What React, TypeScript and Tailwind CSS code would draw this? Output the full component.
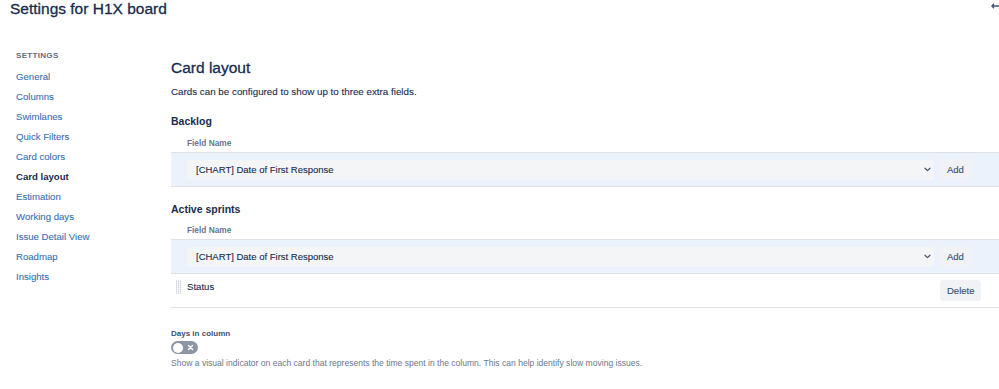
import React from 'react';

const navItems = [
  'General',
  'Columns',
  'Swimlanes',
  'Quick Filters',
  'Card colors',
  'Card layout',
  'Estimation',
  'Working days',
  'Issue Detail View',
  'Roadmap',
  'Insights',
];

function Chevron() {
  return (
    <svg width="7" height="5" viewBox="0 0 7 5" className="shrink-0">
      <path d="M1 1.2 L3.5 3.6 L6 1.2" fill="none" stroke="#42526e" strokeWidth="1.2" strokeLinecap="round" strokeLinejoin="round" />
    </svg>
  );
}

function DragHandle() {
  const dots = [];
  for (let r = 0; r < 7; r++) {
    for (let c = 0; c < 3; c++) {
      dots.push(<rect key={`${r}-${c}`} x={c * 2} y={r * 2 + 0.5} width="1.2" height="1.2" fill="#c1c7d0" />);
    }
  }
  return (
    <svg width="6" height="15" viewBox="0 0 6 15" className="block shrink-0">
      {dots}
    </svg>
  );
}

function ActionButton({ label }: { label: string }) {
  return (
    <div className="flex w-[65px] shrink-0 pl-[6px]">
      <button className="block h-[21px] rounded-[3px] bg-[#f1f2f5] px-[7px] text-[9.5px] leading-[21px] text-[#42526e] [-webkit-text-stroke:0.15px_#42526e]">
        {label}
      </button>
    </div>
  );
}

function FieldPicker({ value }: { value: string }) {
  return (
    <div className="flex items-center border-y border-[#dfe1e6] bg-[#ebf2fc] py-[6px] pl-[16px]">
      <div className="flex h-[20px] flex-1 items-center justify-between rounded-[3px] bg-[#f4f5f7] pl-[9px] pr-[3px]">
        <span className="text-[9.5px] leading-[12px] text-[#172b4d] [-webkit-text-stroke:0.1px_#172b4d]">{value}</span>
        <Chevron />
      </div>
      <ActionButton label="Add" />
    </div>
  );
}

export default function App() {
  return (
    <div className="relative h-[389px] w-[999px] overflow-hidden bg-white font-['Liberation_Sans',Arial,sans-serif] text-[#172b4d]">
      {/* Header */}
      <div className="flex h-[17px] items-start justify-between pl-[10px]">
        <h1 className="text-[15.5px] leading-[17px] text-[#172b4d] [-webkit-text-stroke:0.3px_#172b4d]">Settings for H1X board</h1>
        <svg width="8" height="6" viewBox="0 0 8 6" className="mt-[3px]">
          <path d="M3 0.8 L0.8 3 L3 5.2 M0.8 3 H8" fill="none" stroke="#42526e" strokeWidth="1.3" />
        </svg>
      </div>

      <div className="flex">
        {/* Sidebar */}
        <aside className="w-[171px] shrink-0 pl-[16px] pt-[33px]">
          <div className="mb-[5px] text-[8px] font-bold leading-[12px] tracking-[0.04em] text-[#5e6c84]">SETTINGS</div>
          <ul>
            {navItems.map((item) => (
              <li
                key={item}
                className={
                  item === 'Card layout'
                    ? 'text-[9.6px] font-bold leading-[20px] text-[#172b4d]'
                    : 'text-[9.6px] leading-[20px] text-[#3871b3] [-webkit-text-stroke:0.1px_#3871b3]'
                }
              >
                {item}
              </li>
            ))}
          </ul>
        </aside>

        {/* Main */}
        <main className="flex-1 pt-[41px]">
          <h2 className="text-[15.5px] leading-[20px] text-[#172b4d] [-webkit-text-stroke:0.3px_#172b4d]">Card layout</h2>
          <p className="mt-[7px] text-[9.8px] leading-[14px] text-[#172b4d] [-webkit-text-stroke:0.1px_#172b4d]">Cards can be configured to show up to three extra fields.</p>

          <h3 className="mt-[15px] text-[10.5px] font-bold leading-[14px] text-[#172b4d]">Backlog</h3>
          <div className="mt-[10px] pl-[16px] text-[8.3px] font-bold leading-[11px] text-[#6b778c]">Field Name</div>
          <div className="mt-[3px]">
            <FieldPicker value="[CHART] Date of First Response" />
          </div>

          <h3 className="mt-[15px] text-[10.5px] font-bold leading-[14px] text-[#172b4d]">Active sprints</h3>
          <div className="mt-[9px] pl-[16px] text-[8.3px] font-bold leading-[11px] text-[#6b778c]">Field Name</div>
          <div className="mt-[3px]">
            <FieldPicker value="[CHART] Date of First Response" />
          </div>
          <div className="flex items-start border-b border-[#dfe1e6] pb-[6px] pt-[6px]">
            <div className="flex flex-1 items-start pl-[5px]">
              <DragHandle />
              <span className="ml-[5px] text-[9.6px] leading-[13px] text-[#172b4d] [-webkit-text-stroke:0.1px_#172b4d]">Status</span>
            </div>
            <ActionButton label="Delete" />
          </div>

          <div className="mt-[20px] text-[8px] font-bold leading-[11px] text-[#42526e]">Days in column</div>
          <div className="mt-[2px] flex h-[13px] w-[27px] items-center justify-between rounded-full bg-[#8b95a6] px-[1.5px]">
            <span className="h-[10px] w-[10px] rounded-full bg-white" />
            <svg width="9" height="9" viewBox="0 0 9 9" className="mr-[2px]">
              <path d="M2.5 2.5 L6.5 6.5 M6.5 2.5 L2.5 6.5" stroke="white" strokeWidth="1.4" strokeLinecap="round" />
            </svg>
          </div>
          <p className="mt-[4px] text-[8.55px] leading-[11px] text-[#6b778c]">
            Show a visual indicator on each card that represents the time spent in the column. This can help identify slow moving issues.
          </p>
        </main>
      </div>
    </div>
  );
}
